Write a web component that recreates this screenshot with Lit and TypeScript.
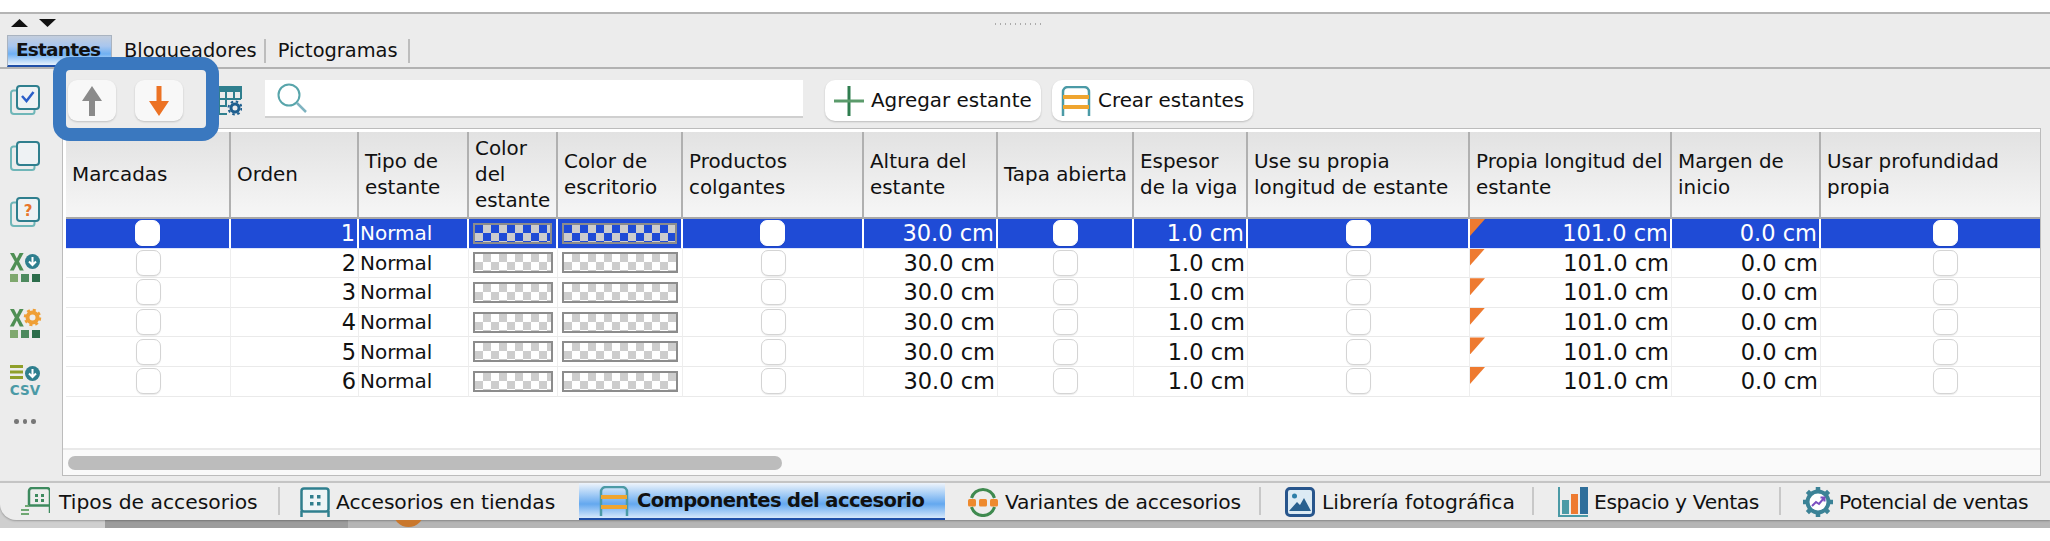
import { LitElement, html, css, svg } from "lit";
import { customElement } from "lit/decorators.js";

const TEAL = "#4b9aa6";
const DTEAL = "#2f7f8e";

const stack = (inner: unknown) => svg`<svg class="side" viewBox="0 0 30 30" width="30" height="30" fill="none">
  <path d="M6 5.500H3.500a2.500 2.500 0 0 0-2.500 2.500V26a3 3 0 0 0 3 3h18a2.500 2.500 0 0 0 2.500-2.500V25" stroke="#6fb6b8" stroke-width="2"/>
  <rect x="7" y="1" width="22" height="23" rx="3" fill="#eef2f4" stroke="${DTEAL}" stroke-width="2"/>${inner}</svg>`;

const xIcon = (badge: unknown) => svg`<svg class="side" viewBox="0 0 30 30" width="30" height="30">
  <path d="M0 0h4l2.800 5.500L9.600 0h4L9 8.500l4.800 9h-4L6.800 11.500 3.800 17.500h-4L4.800 8.500z" fill="#4f8f54"/>
  ${badge}
  <rect x="0" y="21" width="8" height="8" fill="#7fa86e"/><rect x="11" y="21" width="8" height="8" fill="#4d8a5e"/><rect x="22" y="21" width="8" height="8" fill="#2c6d4b"/></svg>`;

const down = svg`<circle cx="22.500" cy="8.500" r="7.500" fill="${DTEAL}"/><path d="M22.500 4v7M19 8.500l3.500 3.500 3.500-3.500" stroke="#fff" stroke-width="2" fill="none"/>`;

const shelf = svg`<svg viewBox="0 0 30 30" width="30" height="30" fill="none">
  <path d="M2 30V6a5 5 0 0 1 5-5h16a5 5 0 0 1 5 5v24" stroke="${TEAL}" stroke-width="2.500"/>
  <path d="M2 11h26M2 21h26" stroke="#efa52f" stroke-width="4"/></svg>`;

const bottomIcons: Record<string, unknown> = {
  tipos: svg`<svg viewBox="0 0 30 30" width="30" height="30" fill="none">
    <path d="M9 18V4a3 3 0 0 1 3-3h15a3 3 0 0 1 3 3v22" stroke="#3d8a5e" stroke-width="2.500"/><path d="M9 18.500h21" stroke="#3d8a5e" stroke-width="2.500"/>
    <path d="M15 7h3v3h-3zM21 7h3v3h-3zM15 12h3v3h-3zM21 12h3v3h-3z" fill="#3d8a5e"/>
    <path d="M1 23h8M1 27h8M5 19h4" stroke="#6fa873" stroke-width="2"/></svg>`,
  tiendas: svg`<svg viewBox="0 0 30 30" width="30" height="30" fill="none">
    <rect x="1.500" y="1.500" width="27" height="23" rx="2.500" fill="#eef5f7" stroke="${DTEAL}" stroke-width="2.500"/><path d="M1.500 24v6M28.500 24v6" stroke="${DTEAL}" stroke-width="2.500"/>
    <path d="M10 8h3.500v3.500H10zM17 8h3.500v3.500H17zM10 15h3.500v3.500H10zM17 15h3.500v3.500H17z" fill="${DTEAL}"/></svg>`,
  shelf,
  variantes: svg`<svg viewBox="0 0 30 30" width="30" height="30" fill="none">
    <path d="M3.500 11a12 12 0 0 1 23 0M3.500 20a12 12 0 0 0 23 0" stroke="#3f8a4f" stroke-width="3"/>
    <rect x="0" y="12" width="8" height="7.500" rx="1.500" fill="#ee8a2e"/><rect x="11" y="12" width="8" height="7.500" rx="1.500" fill="#ee8a2e"/><rect x="22" y="12" width="8" height="7.500" rx="1.500" fill="#ee8a2e"/></svg>`,
  libreria: svg`<svg viewBox="0 0 30 30" width="30" height="30" fill="none">
    <rect x="1.500" y="1.500" width="27" height="27" rx="3.500" fill="#dcebf4" stroke="#27558c" stroke-width="3"/>
    <circle cx="9.500" cy="9" r="2.500" fill="#2c7ea8"/><path d="M4 24l8-9 3 3 4-7 7 13z" fill="#27608f"/></svg>`,
  espacio: svg`<svg viewBox="0 0 30 30" width="30" height="30">
    <rect x="4" y="13" width="7" height="14" fill="#4b9aa6"/><rect x="13" y="7" width="7" height="20" fill="#ee7a30"/><rect x="22" y="0" width="8" height="27" fill="#2f6e9a"/>
    <path d="M1 0v29h29" fill="none" stroke="${TEAL}" stroke-width="2"/></svg>`,
  potencial: svg`<svg viewBox="0 0 30 30" width="30" height="30" fill="none">
    <circle cx="15" cy="15" r="10.500" fill="#fff" stroke="#3b8296" stroke-width="4"/>
    <path d="M15 0v5M15 25v5M0 15h5M25 15h5M4.400 4.400l3.500 3.500M22.100 22.100l3.500 3.500M4.400 25.600l3.500-3.500M22.100 7.900l3.500-3.500" stroke="#3b8296" stroke-width="4.500"/>
    <path d="M9 19l4-4 3 2 5-6M17.500 10.500H21.500V14.500" stroke="#7b4fc0" stroke-width="2"/></svg>`,
};

type Col = { h: unknown; kind: "check" | "num" | "text" | "swatch"; v?: string };
const cols: Col[] = [
  { h: "Marcadas", kind: "check" },
  { h: "Orden", kind: "num", v: "#" },
  { h: html`Tipo de<br />estante`, kind: "text", v: "Normal" },
  { h: html`Color<br />del<br />estante`, kind: "swatch" },
  { h: html`Color de<br />escritorio`, kind: "swatch" },
  { h: html`Productos<br />colgantes`, kind: "check" },
  { h: html`Altura del<br />estante`, kind: "num", v: "30.0 cm" },
  { h: "Tapa abierta", kind: "check" },
  { h: html`Espesor<br />de la viga`, kind: "num", v: "1.0 cm" },
  { h: html`Use su propia<br />longitud de estante`, kind: "check" },
  { h: html`Propia longitud del<br />estante`, kind: "num", v: "101.0 cm" },
  { h: html`Margen de<br />inicio`, kind: "num", v: "0.0 cm" },
  { h: html`Usar profundidad<br />propia`, kind: "check" },
];

const bottomTabs = [
  { icon: "tipos", label: "Tipos de accesorios", cls: "b1" },
  { icon: "tiendas", label: "Accesorios en tiendas", cls: "b2" },
  { icon: "shelf", label: "Componentes del accesorio", cls: "b3 on" },
  { icon: "variantes", label: "Variantes de accesorios", cls: "b4" },
  { icon: "libreria", label: "Librería fotográfica", cls: "b5" },
  { icon: "espacio", label: "Espacio y Ventas", cls: "b6" },
  { icon: "potencial", label: "Potencial de ventas", cls: "b7" },
];

@customElement("app-root")
export class AppRoot extends LitElement {
  static styles = css`
    :host { display: block; width: 2050px; height: 541px; background: #fff; overflow: hidden;
      font-family: "DejaVu Sans", sans-serif; font-size: 19.900px; color: #111; }
    * { box-sizing: border-box; }
    svg { display: block; flex: none; }
    .side { overflow: visible; }
    .top { height: 14px; border-bottom: 2px solid #b4b4b4; }
    .panel { height: 467px; background: #ececec; display: flex; flex-direction: column; }
    .sortbar { height: 21px; display: flex; align-items: flex-start; padding: 5px 0 0 11px; gap: 11px; position: relative; }
    .grip { position: absolute; left: 995px; top: 9px; width: 50px; height: 2px;
      background: repeating-linear-gradient(90deg, #aaa 0 1px, transparent 1px 5px); }
    .tabs { height: 34px; display: flex; align-items: stretch; padding-left: 7px; border-bottom: 2px solid #b2b2b2; font-size: 19.400px; }
    .tab { display: flex; align-items: center; line-height: 1; padding-bottom: 1px; }
    .tab.on { width: 105px; padding-left: 8px; font-weight: 700; font-size: 18.500px; letter-spacing: -.8px;
      border: 1px solid #a9b3c0; border-bottom: 2px solid #1f4fa8;
      background: linear-gradient(#c4cedd 0, #a8c6ee 35%, #6fb0f2 62%, #e8f2fc 100%); }
    .tab.t2 { margin-left: 12px; padding-right: 7px; }
    .tab.t3 { padding: 0 10px 1px 12px; }
    .tsep { width: 2px; margin: 4px 0 4px; background: #bdbdbd; }
    .main { flex: 1; display: flex; min-height: 0; }
    .sidebar { width: 62px; flex: none; display: flex; flex-direction: column; align-items: flex-start;
      padding: 16px 0 0 10px; gap: 26px; }
    .more { display: flex; gap: 4px; padding: 0 0 0 4px; margin-top: -2px; }
    .more i { width: 4.500px; height: 4.500px; border-radius: 50%; background: #777; }
    .content { flex: 1; display: flex; flex-direction: column; padding: 0 9px 5px 0; min-width: 0; }
    .toolbar { height: 59px; flex: none; display: flex; align-items: flex-start; padding: 11px 0 0 6px; }
    .sortgroup { position: relative; z-index: 3; display: flex; gap: 19px; }
    .frameHi { position: absolute; left: -15px; right: -36px; top: -23px; bottom: -20px; border: 13px solid #3a78bf;
      border-radius: 17px; pointer-events: none; }
    .ibtn { width: 48px; height: 41px; border-radius: 9px; background: #f8f8f8;
      box-shadow: 0 1px 2px rgba(0,0,0,.18); display: flex; align-items: center; justify-content: center; }
    .gridicon { margin: 6px 0 0 35px; }
    .search { margin-left: 23px; width: 538px; height: 38px; background: #fff; border-bottom: 2px solid #cfcfcf;
      display: flex; align-items: center; padding-left: 12px; }
    .btn { height: 41px; border-radius: 10px; background: #fff; box-shadow: 0 1px 2px rgba(0,0,0,.2);
      display: flex; align-items: center; white-space: nowrap; }
    .b-add { margin-left: 22px; width: 216px; padding-left: 9px; gap: 7px; }
    .b-create { margin-left: 11px; width: 201px; padding-left: 9px; gap: 7px; }
    .frame { flex: 1; background: #fff; border: 1px solid #bcbcbc; padding: 3px 0 0 3px; min-height: 0;
      display: flex; flex-direction: column; overflow: hidden; }
    .grid { display: grid; width: 2008px; flex: none;
      grid-template-columns: 165px 128px 110px 89px 125px 181px 134px 136px 114px 222px 202px 149px 250px;
      grid-auto-rows: 29.600px; grid-template-rows: 87px; }
    .th { background: linear-gradient(#e2e2e2, #f6f6f6); border-right: 2px solid #b0b0b0; border-bottom: 2px solid #a8a8a8;
      display: flex; align-items: center; padding-left: 6px; line-height: 26px; white-space: nowrap; }
    .td { border-right: 1px solid #eee; border-bottom: 1px solid #eaeaea; display: flex; align-items: center;
      position: relative; white-space: nowrap; }
    .td.sel { background: #1f4bd6; color: #fff; border-right: 2px solid #fff; border-bottom: 1px solid #dfe6fa; }
    .num { justify-content: flex-end; padding-right: 2px; font-size: 22.500px; }
    .txt { padding-left: 1px; font-size: 20px; }
    .chk { justify-content: center; }
    .box { width: 25px; height: 26px; border-radius: 7px; background: #fff; border: 1px solid #d4d4d4; box-shadow: 0 1px 1px rgba(0,0,0,.08); }
    .sel .box { border-color: #fff; }
    .sw { justify-content: center; }
    .swatch { width: calc(100% - 8px); height: 21px; border: 2px solid #8c8c8c;
      background: repeating-conic-gradient(#cdcdcd 0 25%, #fff 0 50%) 0 0 / 16px 16px; }
    .sel .swatch { background: repeating-conic-gradient(#cdcdcd 0 25%, #1f4bd6 0 50%) 0 0 / 16px 16px; }
    .flag { position: absolute; left: 0; top: 0; width: 15px; height: 17px; background: #ee7a30; clip-path: polygon(0 0, 100% 0, 0 100%); }
    .spacer { flex: 1; }
    .hscroll { height: 27px; flex: none; border-top: 2px solid #e9e9e9; background: #fafafa; padding: 6px 0 0 5px; margin-left: -3px; }
    .thumb { width: 714px; height: 14px; border-radius: 7px; background: #bcbcbc; }
    .footer { height: 47px; display: flex; flex-direction: column;
      background: linear-gradient(90deg, #cfcfcf 0 105px, #9c9c9c 105px 348px, #b5b5b5 348px); }
    .bar { height: 39px; flex: none; background: #ededed; border-top: 2px solid #c4c4c4; border-radius: 0 0 0 16px;
      display: flex; align-items: stretch; box-shadow: 0 1px 2px rgba(0,0,0,.25); font-size: 20.300px; }
    .strip { flex: 1; position: relative; overflow: hidden; }
    .sun { position: absolute; left: 393px; top: -24px; width: 31px; height: 31px; border-radius: 50%; background: #c9772c; }
    .bt { display: flex; align-items: center; white-space: nowrap; gap: 7px; flex: none; }
    .bt.on { font-weight: 700; font-size: 19.500px; letter-spacing: -.6px; gap: 8px; border-bottom: 2px solid #1f4fa8;
      background: linear-gradient(#eef4fb 0, #a9cff6 30%, #64a8ef 60%, #d6e8fb 100%); }
    .bsep { width: 2px; margin: 4px 0 5px; background: #c8c8c8; flex: none; }
    .b1 { margin-left: 20px; width: 258px; gap: 9px; }
    .b2 { margin-left: 20px; width: 279px; gap: 6px; letter-spacing: -.1px; }
    .b3 { width: 366px; padding-left: 20px; }
    .b4 { margin-left: 23px; width: 291px; letter-spacing: -.2px; }
    .b5 { margin-left: 24px; width: 247px; }
    .b6 { margin-left: 24px; width: 221px; gap: 6px; letter-spacing: -.4px; }
    .b7 { margin-left: 22px; gap: 6px; letter-spacing: -.5px; }
  `;

  private cell(c: Col, colIndex: number, row: number) {
    const sel = row === 0 ? "sel" : "";
    if (c.kind === "check") return html`<div class="td chk ${sel}"><div class="box"></div></div>`;
    if (c.kind === "swatch") return html`<div class="td sw ${sel}"><div class="swatch"></div></div>`;
    if (c.kind === "text") return html`<div class="td txt ${sel}">${c.v}</div>`;
    const value = c.v === "#" ? String(row + 1) : c.v;
    return html`<div class="td num ${sel}">${colIndex === 10 ? html`<span class="flag"></span>` : ""}${value}</div>`;
  }

  render() {
    return html`
      <div class="top"></div>
      <div class="panel">
        <div class="sortbar">
          <svg width="17" height="8" viewBox="0 0 17 8"><path d="M8.500 0L17 8H0z" fill="#111"/></svg>
          <svg width="17" height="8" viewBox="0 0 17 8"><path d="M0 0h17L8.500 8z" fill="#111"/></svg>
          <div class="grip"></div>
        </div>
        <div class="tabs">
          <div class="tab on">Estantes</div>
          <div class="tab t2">Bloqueadores</div><div class="tsep"></div>
          <div class="tab t3">Pictogramas</div><div class="tsep"></div>
        </div>
        <div class="main">
          <div class="sidebar">
            ${stack(svg`<path d="M12 11l4.500 5 7-9" stroke="#2a5fc9" stroke-width="2.500"/>`)}
            ${stack("")}
            ${stack(svg`<text x="18" y="19" text-anchor="middle" font-family="DejaVu Sans" font-weight="700" font-size="15" fill="#e8762c">?</text>`)}
            ${xIcon(down)}
            ${xIcon(svg`<circle cx="22.500" cy="8.500" r="5" fill="none" stroke="#ef9f36" stroke-width="4"/><circle cx="22.500" cy="8.500" r="7.500" fill="none" stroke="#ef9f36" stroke-width="2.500" stroke-dasharray="3 2.900"/>`)}
            <svg class="side" viewBox="0 0 30 30" width="30" height="30">
              <path d="M0 1.500h13M0 7h13M0 12.500h13" stroke="#8f9f2a" stroke-width="3"/>${down}
              <text x="15" y="30" text-anchor="middle" font-family="DejaVu Sans" font-weight="700" font-size="13.500" fill="${TEAL}">CSV</text>
            </svg>
            <div class="more"><i></i><i></i><i></i></div>
          </div>
          <div class="content">
            <div class="toolbar">
              <div class="sortgroup">
                <div class="ibtn"><svg width="20" height="30" viewBox="0 0 20 30"><path d="M10 0l10 15h-7v15H7V15H0z" fill="#8a8a8a"/></svg></div>
                <div class="ibtn"><svg width="20" height="30" viewBox="0 0 20 30"><path d="M7.500 0h5v15H20L10 30 0 15h7.500z" fill="#ec7224"/></svg></div>
                <div class="frameHi"></div>
              </div>
              <svg class="gridicon" width="24" height="30" viewBox="0 0 24 30" fill="none">
                <path d="M0 0h24v6H0z" fill="${DTEAL}"/><path d="M1 6v22h8M1 13h22M1 20h8M8 6v14M16 6v7M23 6v7" stroke="${DTEAL}" stroke-width="2"/>
                <circle cx="17" cy="22" r="4" stroke="#1f5f8f" stroke-width="3"/><circle cx="17" cy="22" r="6.500" stroke="#1f5f8f" stroke-width="2" stroke-dasharray="2.500 2.600"/>
              </svg>
              <div class="search">
                <svg width="30" height="30" viewBox="0 0 30 30" fill="none"><circle cx="12" cy="12" r="10.500" stroke="#58a5ab" stroke-width="2"/><path d="M20 20l9 9" stroke="#7fb3c0" stroke-width="2.500"/></svg>
              </div>
              <div class="btn b-add">
                <svg width="30" height="30" viewBox="0 0 30 30"><path d="M15 0v30" stroke="#2f7d4f" stroke-width="3"/><path d="M0 15h30" stroke="#5b9b6b" stroke-width="3"/></svg>
                <span>Agregar estante</span>
              </div>
              <div class="btn b-create">${shelf}<span>Crear estantes</span></div>
            </div>
            <div class="frame">
              <div class="grid">
                ${cols.map((c) => html`<div class="th">${c.h}</div>`)}
                ${[0, 1, 2, 3, 4, 5].map((r) => cols.map((c, i) => this.cell(c, i, r)))}
              </div>
              <div class="spacer"></div>
              <div class="hscroll"><div class="thumb"></div></div>
            </div>
          </div>
        </div>
      </div>
      <div class="footer">
        <div class="bar">
          ${bottomTabs.map((t, i) => html`
            ${i > 0 && i !== 2 && i !== 3 ? html`<div class="bsep"></div>` : ""}
            <div class="bt ${t.cls}">${bottomIcons[t.icon]}<span>${t.label}</span></div>`)}
        </div>
        <div class="strip"><div class="sun"></div></div>
      </div>
    `;
  }
}
